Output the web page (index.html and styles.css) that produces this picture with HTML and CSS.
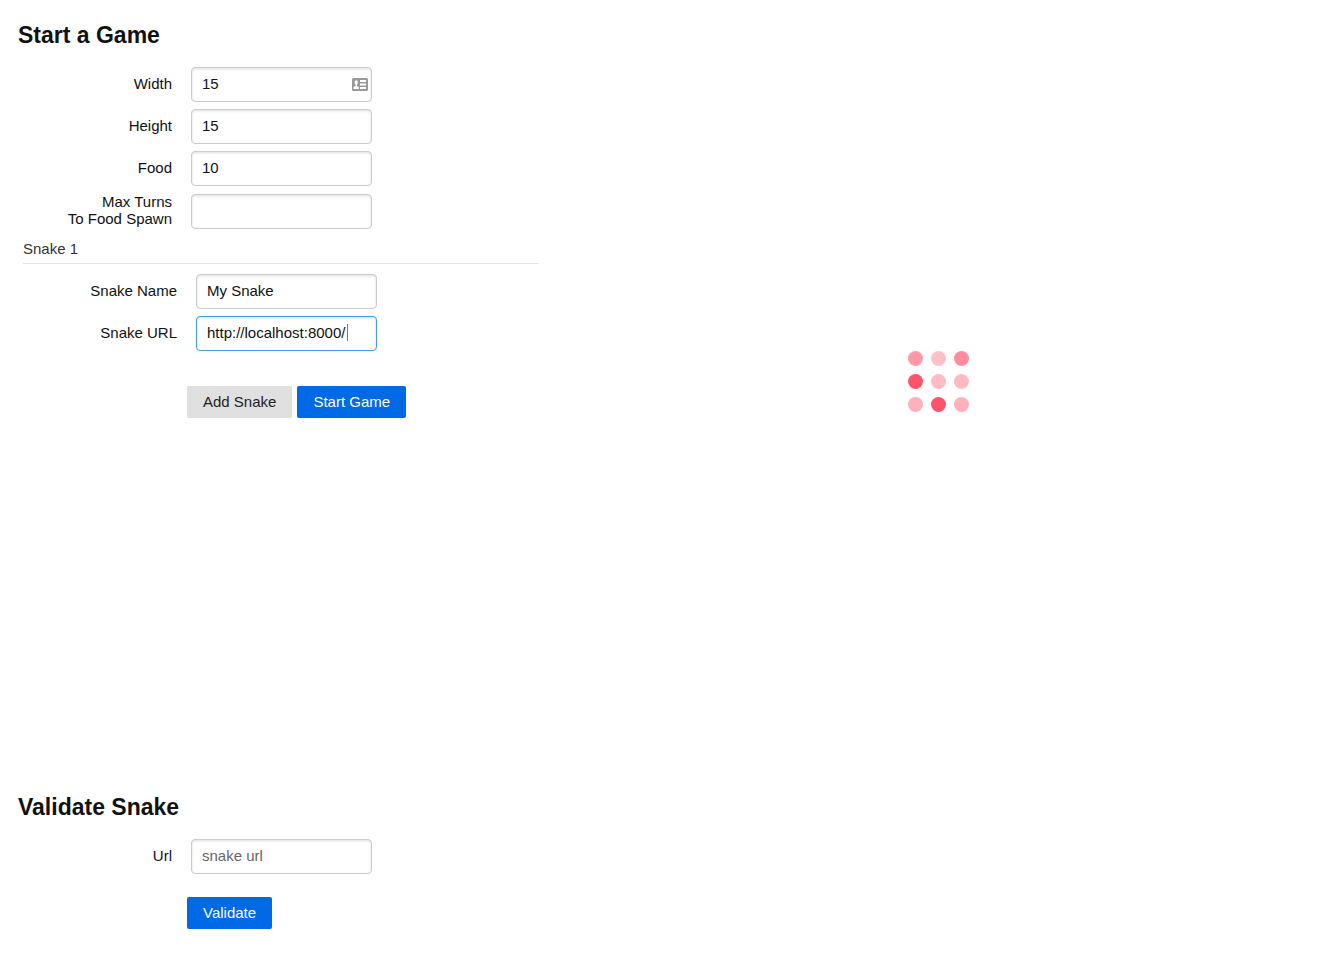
FILE: index.html
```html
<!DOCTYPE html>
<html lang="en">
<head>
<meta charset="utf-8">
<meta name="viewport" content="width=device-width, initial-scale=1">
<title>Start a Game</title>
<link rel="stylesheet" href="styles.css">
</head>
<body>
<main class="page">
  <div class="sidebar">
    <form class="panel panel-game">
      <h1 class="title">Start a Game</h1>
      <div class="fields">
        <div class="row">
          <label for="width">Width</label>
          <div class="control">
            <input id="width" type="text" value="15">
            <svg class="contact-icon" viewBox="0 0 16 13" aria-hidden="true">
              <rect width="16" height="13" rx="1.5" fill="#999"/>
              <path d="M8 2h6v2H8zM8 5.500h6v2H8zM8 9h6v2H8z" fill="#fff"/>
              <ellipse cx="4.200" cy="4.500" rx="1.600" ry="2.300" fill="#fff"/>
              <path d="M3.500 6h1.400v2l2 1v2H1.500V9l2-1z" fill="#fff"/>
            </svg>
          </div>
        </div>
        <div class="row">
          <label for="height">Height</label>
          <div class="control"><input id="height" type="text" value="15"></div>
        </div>
        <div class="row">
          <label for="food">Food</label>
          <div class="control"><input id="food" type="text" value="10"></div>
        </div>
        <div class="row">
          <label for="turns">Max Turns<br>To Food Spawn</label>
          <div class="control"><input id="turns" type="text"></div>
        </div>
      </div>
      <fieldset class="snake">
        <legend>Snake 1</legend>
        <div class="fields">
          <div class="row">
            <label for="snake-name">Snake Name</label>
            <div class="control"><input id="snake-name" type="text" value="My Snake"></div>
          </div>
          <div class="row">
            <label for="snake-url">Snake URL</label>
            <div class="control">
              <input id="snake-url" class="active" type="text" value="http://localhost:8000/">
              <span class="caret"></span>
            </div>
          </div>
        </div>
      </fieldset>
      <div class="actions">
        <button class="button" type="button">Add Snake</button>
        <button class="button button-primary" type="button">Start Game</button>
      </div>
    </form>
    <form class="panel">
      <h2 class="title">Validate Snake</h2>
      <div class="fields">
        <div class="row">
          <label for="url">Url</label>
          <div class="control"><input id="url" type="text" placeholder="snake url"></div>
        </div>
      </div>
      <div class="actions actions-near">
        <button class="button button-primary" type="button">Validate</button>
      </div>
    </form>
  </div>
  <section class="board" aria-label="Loading">
    <div class="loader">
      <i class="dot mid"></i><i class="dot faint"></i><i class="dot strong"></i>
      <i class="dot full"></i><i class="dot pale"></i><i class="dot pale"></i>
      <i class="dot soft"></i><i class="dot full"></i><i class="dot soft"></i>
    </div>
  </section>
</main>
</body>
</html>
```
FILE: styles.css
```css
* {
  box-sizing: border-box;
}

body {
  margin: 0;
  background: #fff;
  color: #111;
  font: 15px/17px "Liberation Sans", Arial, sans-serif;
}

.page {
  display: grid;
  grid-template-columns: 2fr 3fr;
  padding-left: 6px;
}

.sidebar {
  padding: 20px 0 20px 12px;
}

.panel-game {
  min-height: 772px;
}

.title {
  margin: 0 0 17px;
  font-size: 23px;
  line-height: 30px;
  font-weight: bold;
}

.fields {
  display: grid;
  gap: 7px;
}

.row {
  display: flex;
  align-items: center;
  gap: 19px;
}

.row label {
  width: 154px;
  padding-bottom: 2px;
  text-align: right;
}

.control {
  position: relative;
  width: 181px;
}

input {
  display: block;
  width: 100%;
  height: 35px;
  padding: 0 10px 2px;
  border: 1px solid #ccc;
  border-radius: 4px;
  background: #fff;
  box-shadow: inset 0 1px 3px #ddd;
  color: #111;
  font: inherit;
}

input::placeholder {
  color: #666;
  opacity: 1;
}

input.active {
  border-color: #4a9ae8;
}

.contact-icon {
  position: absolute;
  top: 11px;
  right: 4px;
  width: 16px;
  height: 13px;
}

.caret {
  position: absolute;
  top: 8px;
  left: 151px;
  width: 1px;
  height: 17px;
  background: #777;
}

.snake {
  min-width: 0;
  margin: 6px 0 0 5px;
  padding: 0;
  border: 0;
}

.snake legend {
  width: 100%;
  margin-bottom: 10px;
  padding: 5px 0 6px;
  border-bottom: 1px solid #e5e5e5;
  color: #333;
}

.actions {
  display: flex;
  gap: 5px;
  margin: 35px 0 0 169px;
}

.actions-near {
  margin-top: 23px;
}

.button {
  padding: 7px 16px 8px;
  border: 0;
  border-radius: 2px;
  background: #e0e0e0;
  color: #222;
  font: inherit;
}

.button-primary {
  background: #0069e6;
  color: #fff;
}

.board {
  display: flex;
  justify-content: center;
  align-items: center;
  height: 762px;
}

.loader {
  display: grid;
  grid-template-columns: repeat(3, 15px);
  gap: 8px;
}

.dot {
  height: 15px;
  border-radius: 50%;
  background: #ff526c;
}

.mid {
  background: #ff98a8;
}

.faint {
  background: #ffc0ca;
}

.strong {
  background: #ff8c9d;
}

.pale {
  background: #ffbac4;
}

.soft {
  background: #ffb0bc;
}
```
